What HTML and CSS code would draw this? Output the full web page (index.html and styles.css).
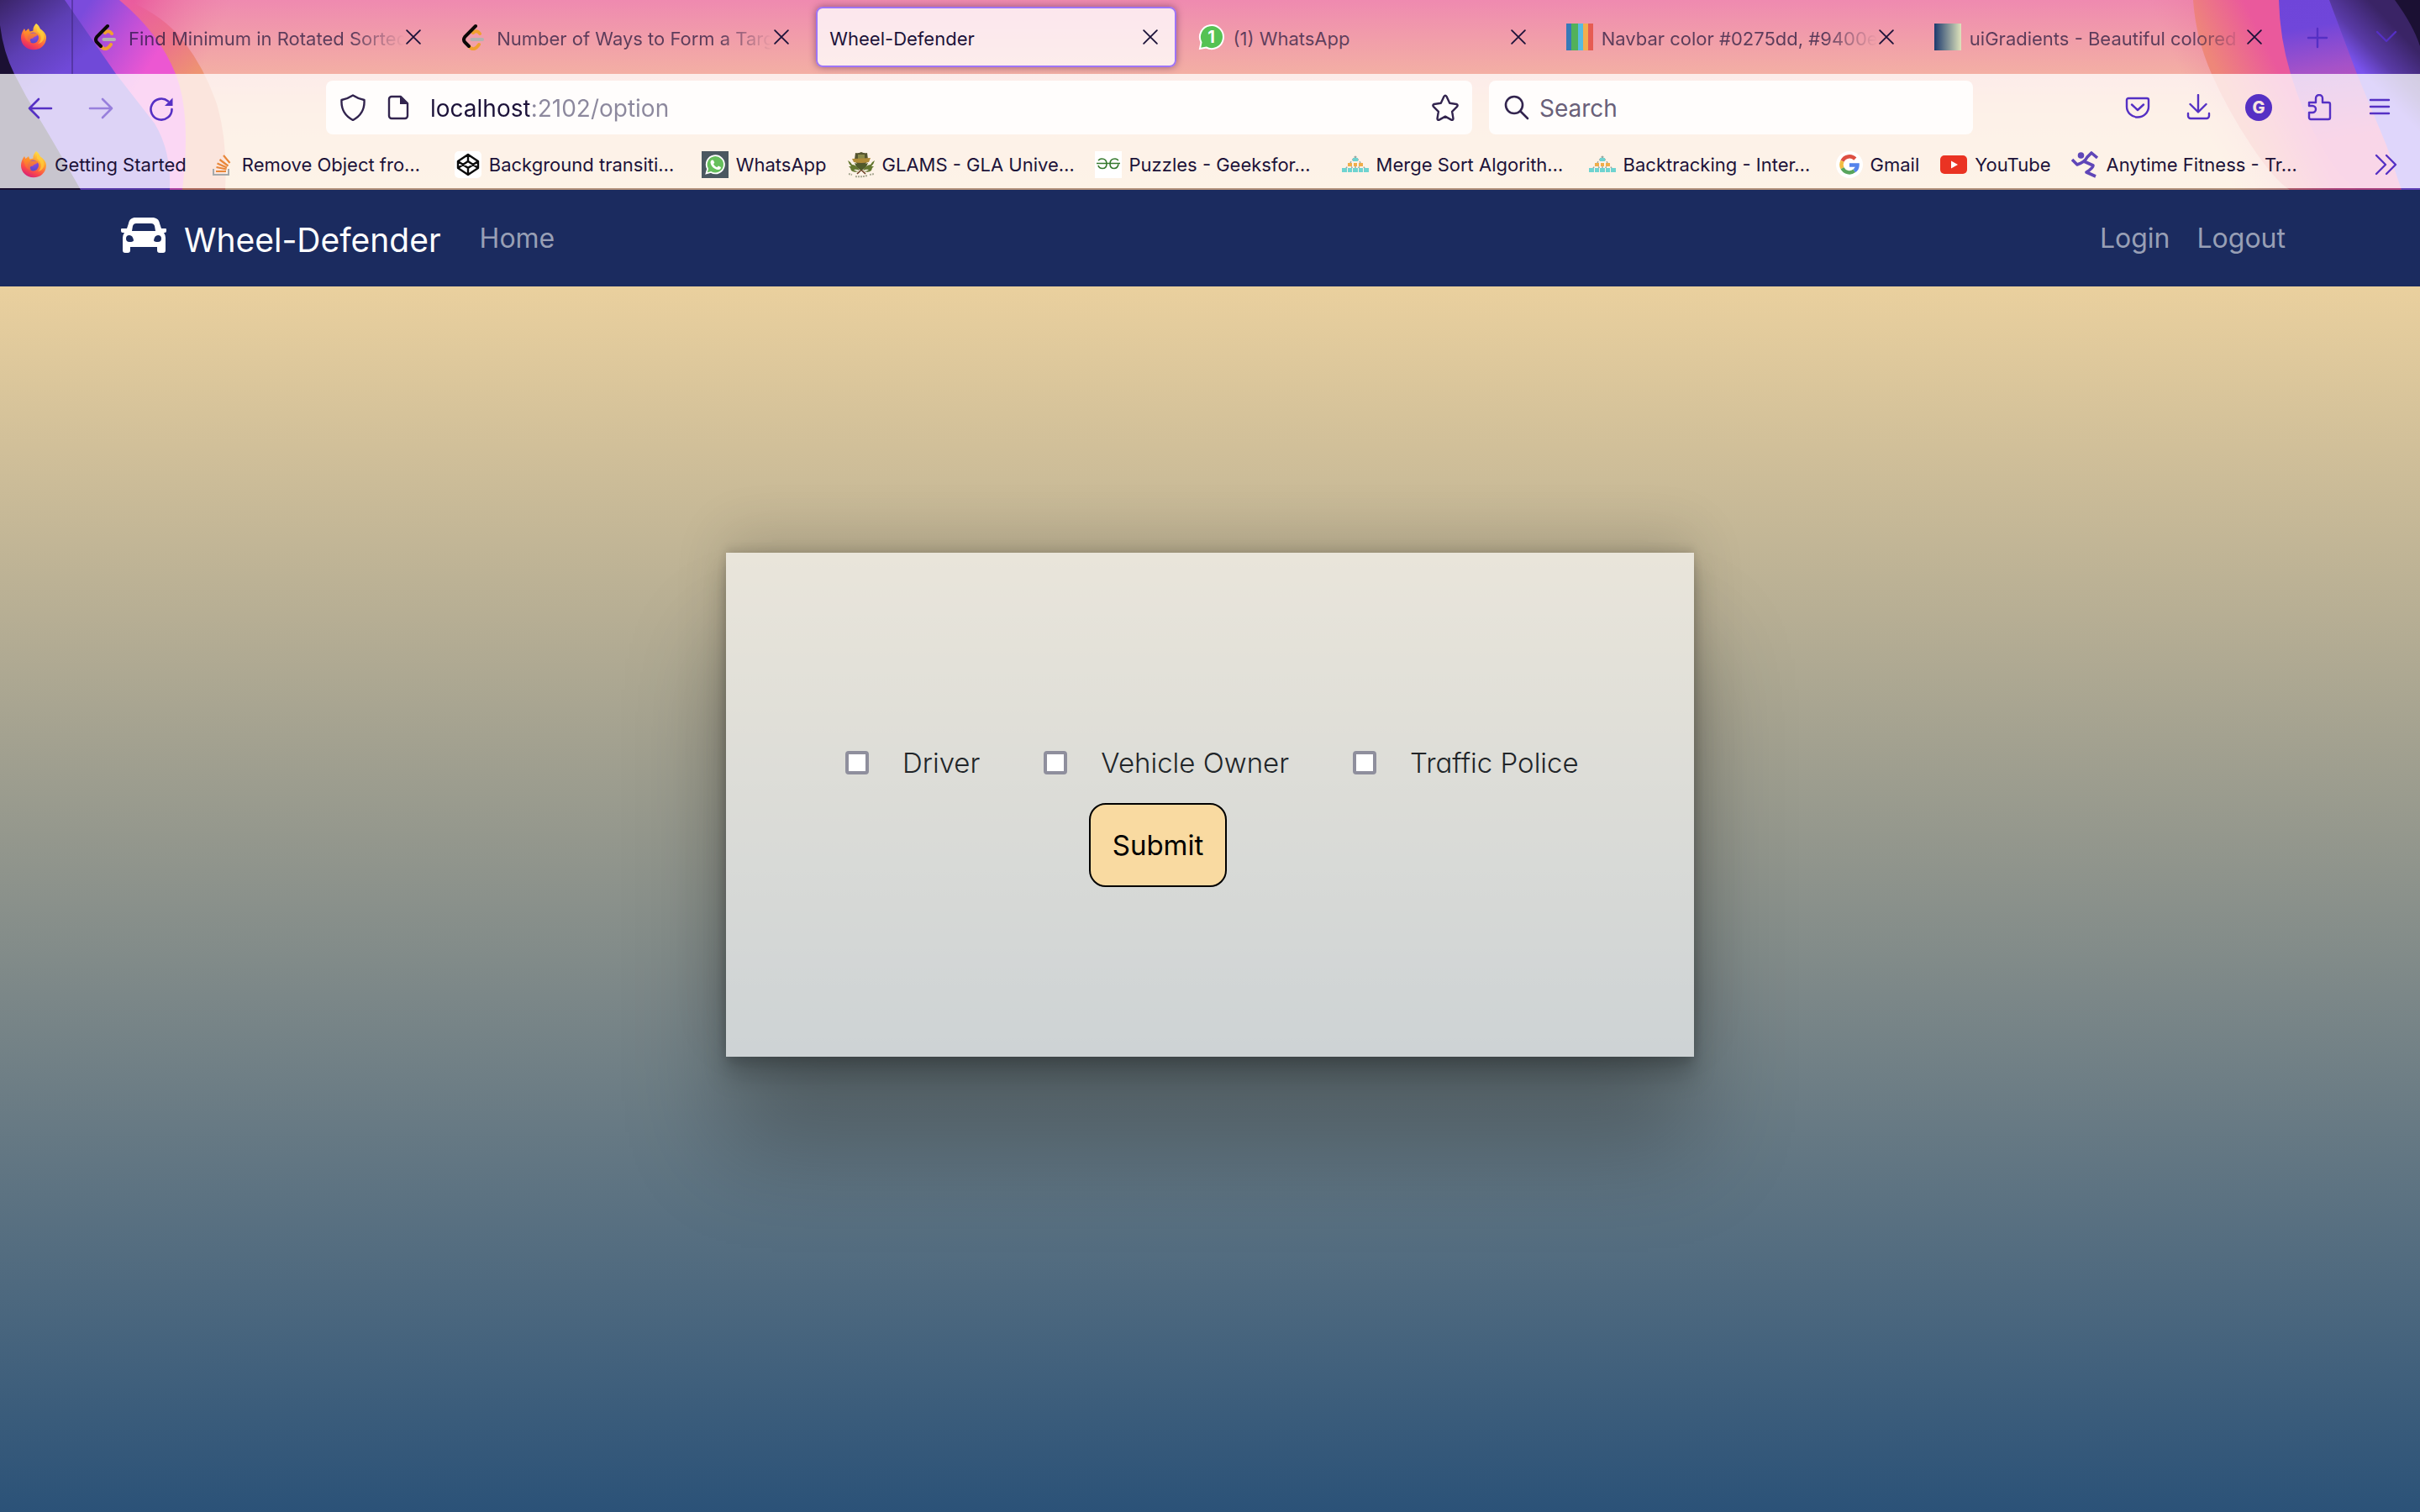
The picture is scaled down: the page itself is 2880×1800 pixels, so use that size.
FILE: index.html
```html
<!DOCTYPE html>
<html lang="en">
<head>
<meta charset="utf-8">
<title>Wheel-Defender</title>
<link rel="stylesheet" href="styles.css">
</head>
<body>
<svg class="defs" aria-hidden="true">
  <defs>
    <linearGradient id="fxBody" x1="0.8" y1="0" x2="0.3" y2="1"><stop offset="0" stop-color="#fff150"/><stop offset="0.4" stop-color="#ff9a30"/><stop offset="0.75" stop-color="#fb4a4a"/><stop offset="1" stop-color="#d6207a"/></linearGradient>
    <radialGradient id="fxGlobe" cx="0.6" cy="0.2" r="0.9"><stop offset="0" stop-color="#a04ae0"/><stop offset="1" stop-color="#4a48c8"/></radialGradient>
    <linearGradient id="fxHead" x1="0" y1="0" x2="0" y2="1"><stop offset="0" stop-color="#ff9a22"/><stop offset="1" stop-color="#fb5a40"/></linearGradient>
    <symbol id="i-firefox" viewBox="0 0 32 32">
      <path fill="url(#fxBody)" d="M19 0c3 2 4.200 4.500 5 6.500 3 2 7.500 5.500 7 11C30.400 26 24 31.300 16 31.300S1 25.500 1 17c0-4 1.500-8 4-11l1.500 3L10 6l1.500 3.500c2-.5 3-.7 4-1C15 5 17 2 19 0z"/>
      <circle cx="15.500" cy="17" r="6.500" fill="url(#fxGlobe)"/>
      <path fill="url(#fxHead)" d="M4 9l3 1.500L10 8l2 3.500h6c2 0 3 .5 3 1.500-1 2.500-4 2-5 3.500s-2 1-3 1.500c-2 1-1 3 .5 4.500-4 0-7.500-3-8-7C5 13 4 11 4 9z" opacity="0.9"/>
      <path fill="#ffd23c" opacity="0.7" d="M20 9c6 4 6 12 1 15 8-1 10-10 4-16l-5-6z"/>
    </symbol>
    <symbol id="i-leet" viewBox="0 0 32 32">
      <g fill="none" stroke-width="4" stroke-linecap="round"><path stroke="#f0a030" d="M14 11c3-3 6-2 8 1M9 27c4 5 8 4 12-2"/><path stroke="#0c0807" d="M17 3L4.500 15.500q-3 4 0 7L9 27"/><path stroke="#b3b1b0" d="M12.500 19H25"/></g>
    </symbol>
    <symbol id="i-so" viewBox="0 0 32 32">
      <path fill="none" stroke="#a5a9ac" stroke-width="2" d="M7 21v7h18v-7"/>
      <g stroke="#e8873a" stroke-width="2.200"><path d="M10 24h12M10.500 19l12 2.500M11.500 14.500l11.500 5M14.500 10l10 7.500M19 5l7.500 9"/></g>
    </symbol>
    <symbol id="i-codepen" viewBox="0 0 32 32">
      <rect width="32" height="32" rx="5" fill="#fff"/>
      <g fill="none" stroke="#0b0b0b" stroke-width="2.400" stroke-linejoin="round"><path d="M16 4l12 8v8l-12 8-12-8v-8zM4 12l12 8 12-8M4 20l12-8 12 8M16 4v8M16 20v8"/></g>
    </symbol>
    <symbol id="i-wa" viewBox="0 0 32 32">
      <rect width="32" height="32" fill="#4a5860"/>
      <path fill="#66bf5c" stroke="#fff" stroke-width="1.800" d="M5.500 26.500l1.600-5.500a10.600 10.600 0 1 1 4 4z"/>
      <path fill="#fff" d="M12.500 10.500l1.500.2 1.300 3-1.300 1.600c1 2 2.500 3.200 4.300 4l1.600-1.700 3 1.500c.2 2-1.500 3.200-3.400 3-4.500-.5-8.500-4.500-9-8.600 0-1.500.9-2.800 2-3z"/>
    </symbol>
    <symbol id="i-wabadge" viewBox="0 0 32 32">
      <path fill="#55c253" stroke="#fff" stroke-width="2" d="M2 30l1.500-7.500A14 14 0 1 1 9.500 28.500z"/>
    </symbol>
    <symbol id="i-glams" viewBox="0 0 32 32">
      <path fill="#55552f" d="M9 2q3 1 7-1 4 2 7 1l1 8q-2 6-8 9-6-3-8-9z"/>
      <path fill="#8a8a4a" d="M12 4h8v5h-8z"/>
      <path fill="#b08c38" d="M5 9l22-1-2 5q-9 2-18 0z"/>
      <path fill="none" stroke="#6b3c22" stroke-width="1.600" d="M11 27q4-4 10-9M21 27q-4-4-10-9"/>
      <path fill="#63762f" d="M0 11q4 2 5 5 5 0 9 7-4-2-7-1 2 2 6 2-6 2-9-1 0-3-3-5l3 0q-3-3-4-7zM32 11q-4 2-5 5-5 0-9 7 4-2 7-1-2 2-6 2 6 2 9-1 0-3 3-5l-3 0q3-3 4-7z"/>
      <path fill="#4f5a2a" d="M8 14q8 3 16 0-2 6-8 9-6-3-8-9z"/>
      <path fill="none" stroke="#a8a893" stroke-width="2" stroke-dasharray="2 1" d="M1 27l4 1M9 30q7 1 14-1M26 28l5-1"/>
    </symbol>
    <symbol id="i-gfg" viewBox="0 0 32 32">
      <rect width="32" height="32" fill="#fff"/>
      <path fill="none" stroke="#35792d" stroke-width="1.600" d="M4 11q2-2 4-2 6 0 6 6 0 5.500-5 5.500-4 0-5-3.500M2 14.500h28M28 11q-2-2-4-2-6 0-6 6 0 5.500 5 5.500 4 0 5-5"/>
    </symbol>
    <symbol id="i-pyramid" viewBox="0 0 32 32">
      <path fill="none" stroke="#9aa6a0" stroke-width="1.500" stroke-dasharray="2 2" d="M16 6L2 24M16 6l14 18M16 6v18M9 15l6 9M23 15l-6 9"/>
      <g fill="#6fd3d0"><path d="M13 8h6v4h-6zM0 20h6v5H0zM7 20h5v5H7zM13 20h6v5h-6zM20 20h5v5h-5zM26 20h6v5h-6z"/></g>
      <path fill="#f0ad4a" d="M7 14h5v4H7zM14 14h4v4h-4zM20 14h5v4h-5z"/>
    </symbol>
    <symbol id="i-google" viewBox="0 0 32 32">
      <circle cx="16" cy="16" r="16" fill="#fff"/>
      <g fill="none" stroke-width="4.500"><path stroke="#dd4f42" d="M7.500 11.700A9.500 9.500 0 0 1 22.800 9.200"/><path stroke="#f2bd42" d="M7.500 11.700a9.500 9.500 0 0 0 0 8.600"/><path stroke="#58a55c" d="M7.500 20.300a9.500 9.500 0 0 0 14.300 3"/><path stroke="#5383ec" d="M16 16.500h9.500q0 4.500-3.700 6.800"/></g>
    </symbol>
    <symbol id="i-youtube" viewBox="0 0 32 32">
      <rect y="5" width="32" height="22" rx="5" fill="#ea3323"/><path fill="#fff" d="M13 11.500l8 4.500-8 4.500z"/>
    </symbol>
    <symbol id="i-runner" viewBox="0 0 32 32">
      <circle cx="11.500" cy="5" r="3.800" fill="#5f46b8"/>
      <path fill="none" stroke="#5f46b8" stroke-width="3.600" stroke-linejoin="round" d="M1 10l6 6q9-3 12-9l5-5 7 6M15 12l11 5q0 3-8 8l11 5"/>
    </symbol>
    <symbol id="i-close" viewBox="0 0 16 16"><path fill="none" stroke="currentColor" stroke-width="1.600" stroke-linecap="round" d="M1 1l14 14M15 1L1 15"/></symbol>
    <symbol id="i-back" viewBox="0 0 32 32"><path fill="none" stroke="currentColor" stroke-width="2.600" stroke-linecap="round" stroke-linejoin="round" d="M29 17H3M14 6L3 17l11 11"/></symbol>
    <symbol id="i-reload" viewBox="0 0 32 32"><path fill="none" stroke="currentColor" stroke-width="2.600" stroke-linecap="round" d="M28.500 18A12.500 12.500 0 1 1 24 8.500"/><path fill="currentColor" d="M29.500 4.500V14H20z"/></symbol>
    <symbol id="i-shield" viewBox="0 0 32 32"><path fill="none" stroke="currentColor" stroke-width="2.400" stroke-linejoin="round" d="M16 1.500q6 4 13.500 5.500 1 16.500-13.500 24Q1.500 23.500 2.500 7 10 5.500 16 1.500z"/></symbol>
    <symbol id="i-page" viewBox="0 0 32 32"><path fill="none" stroke="currentColor" stroke-width="2.400" stroke-linejoin="round" d="M8 3h11l8 8v15a3 3 0 0 1-3 3H8a3 3 0 0 1-3-3V6a3 3 0 0 1 3-3z"/><path fill="currentColor" d="M18 3v9h9z"/></symbol>
    <symbol id="i-star" viewBox="0 0 32 32"><path fill="none" stroke="currentColor" stroke-width="2.400" stroke-linejoin="round" d="M14.500 2.800q1.500-2.400 3 0l3.700 8 8 1.200q2.300.8.900 2.800l-6 6 1.400 8.300q-.2 2.300-2.400 1.500L16 26.600l-7.100 4q-2.200.8-2.400-1.500l1.400-8.300-6-6q-1.400-2 .9-2.800l8-1.200z"/></symbol>
    <symbol id="i-search" viewBox="0 0 32 32"><g fill="none" stroke="currentColor" stroke-width="2.600" stroke-linecap="round"><circle cx="14" cy="13" r="10"/><path d="M21.500 20.500L30 29"/></g></symbol>
    <symbol id="i-pocket" viewBox="0 0 32 32"><g fill="none" stroke="currentColor" stroke-width="2.400" stroke-linecap="round" stroke-linejoin="round"><path d="M5 5h22a2 2 0 0 1 2 2v8c0 7-6 12.500-13 12.500S3 22 3 15V7a2 2 0 0 1 2-2z"/><path d="M9 12.500l7 6.500 7-6.500"/></g></symbol>
    <symbol id="i-download" viewBox="0 0 32 32"><g fill="none" stroke="currentColor" stroke-width="2.400" stroke-linecap="round" stroke-linejoin="round"><path d="M16 1v20M6.500 12l9.500 9.500 9.500-9.500M4 23v3a3 3 0 0 0 3 3h19a3 3 0 0 0 3-3v-3"/></g></symbol>
    <symbol id="i-puzzle" viewBox="0 0 32 32"><path fill="none" stroke="currentColor" stroke-width="2.400" stroke-linejoin="round" d="M4 10h8V5a4 4 0 0 1 8 0v5h7a2 2 0 0 1 2 2v16a2 2 0 0 1-2 2H6a2 2 0 0 1-2-2v-6h4a4 4 0 0 0 0-8H4z"/></symbol>
    <symbol id="i-menu" viewBox="0 0 32 32"><path stroke="currentColor" stroke-width="2.400" stroke-linecap="round" d="M5 7h22M5 15h22M5 23h22"/></symbol>
    <symbol id="i-plus" viewBox="0 0 32 32"><path stroke="currentColor" stroke-width="2.400" stroke-linecap="round" d="M16 6v22M5 17h22"/></symbol>
    <symbol id="i-chevron" viewBox="0 0 32 32"><path fill="none" stroke="currentColor" stroke-width="2.400" stroke-linecap="round" stroke-linejoin="round" d="M5 10l11 11L27 10"/></symbol>
    <symbol id="i-more" viewBox="0 0 32 32"><path fill="none" stroke="currentColor" stroke-width="2.400" stroke-linecap="round" stroke-linejoin="round" d="M4 5l11 11L4 27M16 5l11 11-11 11"/></symbol>
    <symbol id="i-swatch" viewBox="0 0 32 32"><path fill="#3779b8" d="M0 0h6v32H0z"/><path fill="#52b15a" d="M6 0h8v32H6z"/><path fill="#57bbe0" d="M14 0h6v32h-6z"/><path fill="#f2ae4e" d="M20 0h6v32h-6z"/><path fill="#e65c52" d="M26 0h6v32h-6z"/></symbol>
    <linearGradient id="ug"><stop offset="0" stop-color="#1c3a6e"/><stop offset="1" stop-color="#dfe3bb"/></linearGradient>
    <symbol id="i-uig" viewBox="0 0 32 32"><rect width="32" height="32" fill="url(#ug)"/></symbol>
    <symbol id="i-car" viewBox="0 0 54 42"><path fill="currentColor" fill-rule="evenodd" d="M17 0h20c5 0 8 2 9 7l2 6h5q1 0 1 1v2q0 2-2 2h-1q2 3 2 6v15q0 3-3 3h-4q-3 0-3-3v-4H11v4q0 3-3 3H5q-3 0-3-3V24q0-3 2-6H2q-2 0-2-2v-2q0-1 1-1h6l2-6c1-5 4-7 8-7zM18 7q-3 0-4 3l-1 6h28l-1-6q-1-3-4-3zM10 21a4 4 0 1 0 0 8q5 0 5-2-1-6-5-6zM44 21q-4 0-5 6 0 2 5 2a4 4 0 1 0 0-8z"/></symbol>

    <linearGradient id="lBand" gradientUnits="userSpaceOnUse" x1="0" y1="0" x2="70" y2="90"><stop offset="0" stop-color="#3a2468"/><stop offset="0.55" stop-color="#5d3fb4"/><stop offset="1" stop-color="#7049d8"/></linearGradient>
    <linearGradient id="lMag" gradientUnits="userSpaceOnUse" x1="95" y1="20" x2="180" y2="75"><stop offset="0" stop-color="#7b4bdc"/><stop offset="0.5" stop-color="#b84fd8"/><stop offset="1" stop-color="#ec57d2"/></linearGradient>
    <linearGradient id="lOr" gradientUnits="userSpaceOnUse" x1="160" y1="0" x2="230" y2="90"><stop offset="0" stop-color="#ea5c9f"/><stop offset="0.6" stop-color="#ec7688"/><stop offset="1" stop-color="#ee9472"/></linearGradient>
    <linearGradient id="lGlow" gradientUnits="userSpaceOnUse" x1="160" y1="0" x2="258" y2="44"><stop offset="0" stop-color="#e9579c" stop-opacity="0.900"/><stop offset="1" stop-color="#ee80a6" stop-opacity="0"/></linearGradient>
    <linearGradient id="rOr" gradientUnits="userSpaceOnUse" x1="25" y1="60" x2="85" y2="30"><stop offset="0" stop-color="#ee8779"/><stop offset="1" stop-color="#ea599c"/></linearGradient>
    <linearGradient id="rPur" gradientUnits="userSpaceOnUse" x1="130" y1="0" x2="160" y2="170"><stop offset="0" stop-color="#6f45d9"/><stop offset="0.200" stop-color="#7046da"/><stop offset="0.500" stop-color="#a552c8"/><stop offset="1" stop-color="#e655a0"/></linearGradient>
    <linearGradient id="rVio" gradientUnits="userSpaceOnUse" x1="215" y1="90" x2="262" y2="45"><stop offset="0" stop-color="#7a53ee"/><stop offset="0.400" stop-color="#593aa6"/><stop offset="1" stop-color="#3a2466"/></linearGradient>
    <linearGradient id="rGlow" gradientUnits="userSpaceOnUse" x1="-45" y1="0" x2="40" y2="-39"><stop offset="0" stop-color="#ea7ea0" stop-opacity="0"/><stop offset="1" stop-color="#ea6fa0" stop-opacity="0.600"/></linearGradient>
  </defs>
</svg>

<header class="browser">
  <svg class="art art-left" viewBox="0 0 280 226" aria-hidden="true">
    <path fill="url(#lGlow)" d="M140 0h140v226H140z"/>
    <path fill="url(#lOr)" d="M0 0H150Q195 18 220 51T259 127Q271 170 268 226H0z"/>
    <path fill="url(#lMag)" d="M0 0H142Q190 40 209 88T217 226H0z"/>
    <path fill="url(#lBand)" d="M0 0H77L138 88 184 147Q204 180 202 226H0z"/>
    <path fill="#1b1033" d="M0 30Q4 62 17 88T46 140 96 226H0z"/>
  </svg>
  <svg class="art art-right" viewBox="-60 0 340 226" aria-hidden="true">
    <path fill="url(#rGlow)" d="M-60 0H180V226H-60z"/>
    <path fill="url(#rOr)" d="M10 0Q13 45 32 88T79 173 125 226H280V0z"/>
    <path fill="url(#rPur)" d="M112 0Q113 45 126 88T160 170 205 226H280V0z"/>
    <path fill="url(#rVio)" d="M172 0L188 43 205 88 240 173 258 226H280V0z"/>
    <path fill="#1b1033" d="M250 0Q272 30 280 55V0z"/>
  </svg>

  <div class="tabstrip">
    <button class="view" aria-label="Firefox View"><svg class="icon"><use href="#i-firefox"/></svg></button>
    <div class="tabs">
      <div class="tab"><svg class="icon"><use href="#i-leet"/></svg><a class="title faded" href="#">Find Minimum in Rotated Sorted</a><button class="close" aria-label="Close tab"><svg><use href="#i-close"/></svg></button></div>
      <div class="tab"><svg class="icon"><use href="#i-leet"/></svg><a class="title faded" href="#">Number of Ways to Form a Targ</a><button class="close" aria-label="Close tab"><svg><use href="#i-close"/></svg></button></div>
      <div class="tab active"><a class="title" href="#">Wheel-Defender</a><button class="close" aria-label="Close tab"><svg><use href="#i-close"/></svg></button></div>
      <div class="tab"><span class="badged"><svg class="icon"><use href="#i-wabadge"/></svg><b class="count">1</b></span><a class="title" href="#">(1) WhatsApp</a><button class="close" aria-label="Close tab"><svg><use href="#i-close"/></svg></button></div>
      <div class="tab"><svg class="icon"><use href="#i-swatch"/></svg><a class="title faded" href="#">Navbar color #0275dd, #9400e</a><button class="close" aria-label="Close tab"><svg><use href="#i-close"/></svg></button></div>
      <div class="tab"><svg class="icon"><use href="#i-uig"/></svg><a class="title faded" href="#">uiGradients - Beautiful colored</a><button class="close" aria-label="Close tab"><svg><use href="#i-close"/></svg></button></div>
    </div>
    <div class="tab-tools">
      <button class="tool" aria-label="New tab"><svg class="icon"><use href="#i-plus"/></svg></button>
      <button class="tool" aria-label="List all tabs"><svg class="icon"><use href="#i-chevron"/></svg></button>
    </div>
  </div>

  <div class="chrome">
    <div class="toolbar">
      <div class="tools">
        <button class="tool" aria-label="Back"><svg class="icon"><use href="#i-back"/></svg></button>
        <button class="tool forward" aria-label="Forward" disabled><svg class="icon"><use href="#i-back"/></svg></button>
        <button class="tool" aria-label="Reload"><svg class="icon"><use href="#i-reload"/></svg></button>
      </div>
      <div class="fields">
        <div class="field url">
          <svg class="icon"><use href="#i-shield"/></svg>
          <svg class="icon"><use href="#i-page"/></svg>
          <input class="address" type="text" aria-label="Address" value="localhost:2102/option">
          <svg class="icon"><use href="#i-star"/></svg>
        </div>
        <div class="field search">
          <svg class="icon"><use href="#i-search"/></svg>
          <input class="query" type="text" aria-label="Search" placeholder="Search">
        </div>
      </div>
      <div class="tools">
        <button class="tool" aria-label="Save to Pocket"><svg class="icon"><use href="#i-pocket"/></svg></button>
        <button class="tool" aria-label="Downloads"><svg class="icon"><use href="#i-download"/></svg></button>
        <button class="tool"><span class="avatar">G</span></button>
        <button class="tool" aria-label="Extensions"><svg class="icon"><use href="#i-puzzle"/></svg></button>
        <button class="tool" aria-label="Menu"><svg class="icon"><use href="#i-menu"/></svg></button>
      </div>
    </div>
    <nav class="bookmarks" aria-label="Bookmarks">
      <a class="mark" href="#"><svg class="icon"><use href="#i-firefox"/></svg>Getting Started</a>
      <a class="mark long" href="#"><svg class="icon"><use href="#i-so"/></svg>Remove Object fro…</a>
      <a class="mark long" href="#"><svg class="icon"><use href="#i-codepen"/></svg>Background transiti…</a>
      <a class="mark" href="#"><svg class="icon"><use href="#i-wa"/></svg>WhatsApp</a>
      <a class="mark long" href="#"><svg class="icon"><use href="#i-glams"/></svg>GLAMS - GLA Unive…</a>
      <a class="mark long" href="#"><svg class="icon"><use href="#i-gfg"/></svg>Puzzles - Geeksfor…</a>
      <a class="mark long" href="#"><svg class="icon"><use href="#i-pyramid"/></svg>Merge Sort Algorith…</a>
      <a class="mark long" href="#"><svg class="icon"><use href="#i-pyramid"/></svg>Backtracking - Inter…</a>
      <a class="mark" href="#"><svg class="icon"><use href="#i-google"/></svg>Gmail</a>
      <a class="mark" href="#"><svg class="icon"><use href="#i-youtube"/></svg>YouTube</a>
      <a class="mark long" href="#"><svg class="icon"><use href="#i-runner"/></svg>Anytime Fitness - Tr…</a>
      <button class="tool more" aria-label="More bookmarks"><svg class="icon"><use href="#i-more"/></svg></button>
    </nav>
  </div>
</header>

<div class="page">
  <nav class="navbar">
    <a class="brand" href="#"><svg class="car" viewBox="0 0 54 42" aria-hidden="true"><use href="#i-car"/></svg>Wheel-Defender</a>
    <a class="link" href="#">Home</a>
    <div class="account"><a class="link" href="#">Login</a><a class="link" href="#">Logout</a></div>
  </nav>
  <main class="main">
    <form class="card">
      <div class="form">
        <div class="options">
          <label class="option"><input class="box" type="checkbox" name="driver">Driver</label>
          <label class="option"><input class="box" type="checkbox" name="owner">Vehicle Owner</label>
          <label class="option"><input class="box" type="checkbox" name="police">Traffic Police</label>
        </div>
        <button class="submit" type="button">Submit</button>
      </div>
    </form>
  </main>
</div>
</body>
</html>
```
FILE: styles.css
```css
* { box-sizing: border-box; }

body {
  margin: 0;
  min-height: 100vh;
  display: flex;
  flex-direction: column;
  font-family: Inter, "Liberation Sans", sans-serif;
  color: #1c1239;
}

a { color: inherit; text-decoration: none; }

button {
  font: inherit;
  color: inherit;
  background: none;
  border: 0;
  padding: 0;
}

input { font: inherit; }

.defs { position: absolute; width: 0; height: 0; }

.icon { display: block; width: 32px; height: 32px; flex: none; }

/* Browser window */
.browser {
  position: relative;
  overflow: hidden;
  background: linear-gradient(#ef8ab0 0, #f3afa4 88px, #f6c59e 140px, #f7cc9c 226px);
}

.art { position: absolute; top: 0; height: 226px; }
.art-left { left: 0; width: 280px; }
.art-right { right: 0; width: 340px; }

.tabstrip {
  position: relative;
  display: flex;
  height: 88px;
}

.view {
  width: 87px;
  padding-left: 24px;
  border-right: 2px solid rgba(60, 35, 120, 0.5);
}

.tabs {
  flex: 1;
  display: flex;
  gap: 10px;
  padding: 8px;
}

.tab {
  flex: 1 1 0;
  min-width: 0;
  display: flex;
  align-items: center;
  gap: 10px;
  padding: 0 22px 0 16px;
  border-radius: 8px;
  font-size: 22px;
  color: rgba(28, 18, 57, 0.7);
}

.tab.active {
  color: #1c1239;
  background: rgba(255, 255, 255, 0.78);
  border: 2px solid #9e74f5;
  padding: 0 20px 0 14px;
  box-shadow: 0 0 8px rgba(60, 20, 60, 0.5);
}

.title {
  flex: 1;
  min-width: 0;
  padding-top: 4px;
  overflow: hidden;
  white-space: nowrap;
}

.faded { mask-image: linear-gradient(90deg, #000 calc(100% - 64px), transparent 100%); }

.close { color: #1c1239; margin-left: -8px; }
.close svg { display: block; width: 18px; height: 18px; }

.badged { position: relative; }
.count {
  position: absolute;
  inset: 0;
  font-size: 20px;
  line-height: 32px;
  text-align: center;
  color: #fff;
}

.tab-tools {
  display: flex;
  align-items: center;
  gap: 10px;
  padding-right: 4px;
}

.tool {
  width: 72px;
  height: 64px;
  display: grid;
  place-items: center;
  color: #5530c4;
}

.forward .icon { transform: scaleX(-1); opacity: 0.5; }

.chrome {
  position: relative;
  background: rgba(255, 255, 255, 0.76);
  border-bottom: 2px solid rgba(28, 16, 51, 0.3);
  background-clip: padding-box;
}

.toolbar {
  display: flex;
  align-items: center;
  gap: 160px;
  padding: 8px 12px;
}

.tools { display: flex; }

.fields {
  flex: 1;
  display: grid;
  grid-template-columns: 1364fr 576fr;
  gap: 20px;
}

.field {
  display: flex;
  align-items: center;
  height: 64px;
  padding: 0 16px;
  border-radius: 8px;
  background: rgba(255, 255, 255, 0.85);
  color: #32244e;
  font-size: 28px;
  min-width: 0;
}

.url { gap: 22px; }
.search { gap: 12px; }

.address,
.query {
  flex: 1;
  min-width: 0;
  height: 64px;
  padding: 2px 0 0;
  border: 0;
  outline: 0;
  background: none;
}

.address {
  background: linear-gradient(90deg, #1c1239 118px, #8c889d 118px);
  background-clip: text;
  -webkit-background-clip: text;
  -webkit-text-fill-color: transparent;
  color: #1c1239;
}

.query::placeholder { color: #696079; opacity: 1; }

.avatar {
  width: 32px;
  height: 32px;
  border-radius: 50%;
  background: #5530c4;
  color: #f8e4e0;
  font-size: 20px;
  font-weight: 800;
  line-height: 32px;
  text-align: center;
}

.bookmarks {
  display: flex;
  align-items: center;
  gap: 25px;
  height: 56px;
  padding: 0 4px 0 24px;
  font-size: 22px;
  white-space: nowrap;
}

.mark { display: flex; align-items: center; gap: 9px; }
.long { width: 269px; }
.more { margin-left: auto; height: 56px; }

/* Wheel-Defender site */
.page {
  flex: 1;
  display: flex;
  flex-direction: column;
  background: linear-gradient(#f9daa1, #2b5278);
}

.navbar {
  display: flex;
  align-items: center;
  min-height: 115px;
  padding: 0 160px 0 144px;
  background: #1b2b5f;
}

.brand {
  display: flex;
  align-items: center;
  gap: 21px;
  margin-right: 46px;
  padding-top: 4px;
  font-size: 39px;
  color: #fff;
}

.car { width: 54px; height: 42px; margin-bottom: 12px; }

.link { font-size: 32px; color: #989fb5; }

.account {
  display: flex;
  gap: 32px;
  margin-left: auto;
}

.main {
  flex: 1;
  display: flex;
  justify-content: center;
  align-items: flex-start;
  padding-top: 317px;
}

.card {
  width: 40%;
  min-height: 600px;
  padding: 226px 0 0 142px;
  background: rgba(255, 255, 255, 0.65);
  box-shadow:
    0 108px 110px rgba(0, 0, 0, 0.25),
    0 -24px 60px rgba(0, 0, 0, 0.12),
    0 8px 12px rgba(0, 0, 0, 0.12),
    0 24px 26px rgba(0, 0, 0, 0.17),
    0 -6px 10px rgba(0, 0, 0, 0.09);
}

.options {
  display: flex;
  gap: 76px;
  line-height: 48px;
}

.form {
  font-size: 33px;
  font-weight: 300;
  font-feature-settings: "cv11";
  color: #212529;
  white-space: nowrap;
}

.option { display: flex; align-items: center; gap: 40px; }

.box {
  appearance: none;
  width: 28px;
  height: 28px;
  margin: 0;
  border: 4px solid #8f8f9d;
  border-radius: 4px;
  background: #fff;
}

.submit {
  margin: 24px 0 0 290px;
  width: 164px;
  height: 100px;
  border: 2px solid #000;
  border-radius: 20px;
  background: #f9daa1;
  color: #000;
  font-weight: 400;
}
```
